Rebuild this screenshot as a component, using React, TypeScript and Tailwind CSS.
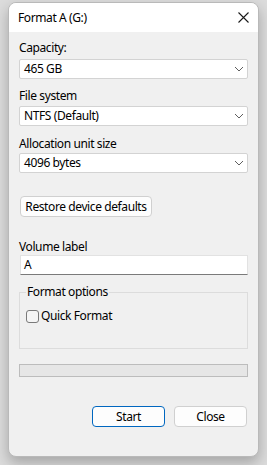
import React from "react";

const font = { fontFamily: '"Segoe UI", "Noto Sans", sans-serif' };

const Chevron = () => (
  <svg width="10" height="6" viewBox="0 0 10 6" className="text-[#5f5f5f]">
    <path d="M1 1 L5 5 L9 1" fill="none" stroke="currentColor" strokeWidth="1" />
  </svg>
);

const Select = ({ value }: { value: string }) => (
  <div className="flex h-[20px] items-center justify-between rounded-[2px] border border-[#d3d3d3] bg-white pl-[4px] pr-[3px] text-[12px] text-black">
    <span>{value}</span>
    <Chevron />
  </div>
);

const Label = ({ children, className }: { children: React.ReactNode; className?: string }) => (
  <div className={`h-[16px] text-[12px] leading-[16px] text-black ${className ?? ""}`}>{children}</div>
);

export default function App() {
  return (
    <div
      className="h-[465px] w-[267px] whitespace-nowrap bg-[#dcdcdc] px-[8px] pt-[2px] tracking-[-0.4px]"
      style={font}
    >
      <div className="flex h-[455px] w-[251px] flex-col overflow-hidden rounded-[8px] border border-[#b9b9b9] bg-[#f0f0f0] shadow-[0_6px_14px_rgba(0,0,0,0.25)]">
        {/* title bar */}
        <div className="flex h-[29px] shrink-0 items-center justify-between bg-white pl-[9px] pr-[9px]">
          <span className="text-[12px] text-black">Format A (G:)</span>
          <svg width="11" height="11" viewBox="0 0 11 11">
            <path d="M0.5 0.5 L10.5 10.5 M10.5 0.5 L0.5 10.5" stroke="#1a1a1a" strokeWidth="1.1" />
          </svg>
        </div>

        {/* body */}
        <div className="flex flex-col pl-[10px] pr-[10px] pt-[8px]">
          <Label>Capacity:</Label>
          <div className="mt-[3px]">
            <Select value="465 GB" />
          </div>

          <Label className="mt-[9px]">File system</Label>
          <div className="mt-[2px]">
            <Select value="NTFS (Default)" />
          </div>

          <Label className="mt-[10px]">Allocation unit size</Label>
          <div className="mt-[1px]">
            <Select value="4096 bytes" />
          </div>

          <button className="ml-[1px] mt-[23px] h-[21px] w-[132px] rounded-[4px] border border-[#d0d0d0] bg-[#fdfdfd] text-[12px] text-black">
            Restore device defaults
          </button>

          <Label className="mt-[22px]">Volume label</Label>
          <div className="ml-[1px] flex h-[20px] items-center border border-[#e2e2e2] border-b-[#7a7a7a] bg-white pl-[3px] text-[12px] text-black">
            A
          </div>

          <fieldset className="mt-[9px] h-[65px] border border-[#dcdcdc] pl-[6px] pr-[6px]">
            <legend className="px-[1px] text-[12px] leading-[16px] text-black">Format options</legend>
            <label className="mt-[8px] flex items-center gap-[2px] text-[12px] text-black">
              <span className="h-[13px] w-[13px] rounded-[3px] border border-[#7a7a7a] bg-[#f5f5f5]" />
              <span className="leading-[16px]">Quick Format</span>
            </label>
          </fieldset>

          <div className="mt-[15px] h-[13px] border border-[#bcbcbc] bg-[#e6e6e6]" />

          <div className="mt-[29px] flex justify-end gap-[9px] pr-[1px]">
            <button className="h-[21px] w-[73px] rounded-[4px] border border-[#0067c0] bg-[#fdfdfd] text-[12px] text-black">
              Start
            </button>
            <button className="h-[21px] w-[73px] rounded-[4px] border border-[#d0d0d0] bg-[#fdfdfd] text-[12px] text-black">
              Close
            </button>
          </div>
        </div>
      </div>
    </div>
  );
}
